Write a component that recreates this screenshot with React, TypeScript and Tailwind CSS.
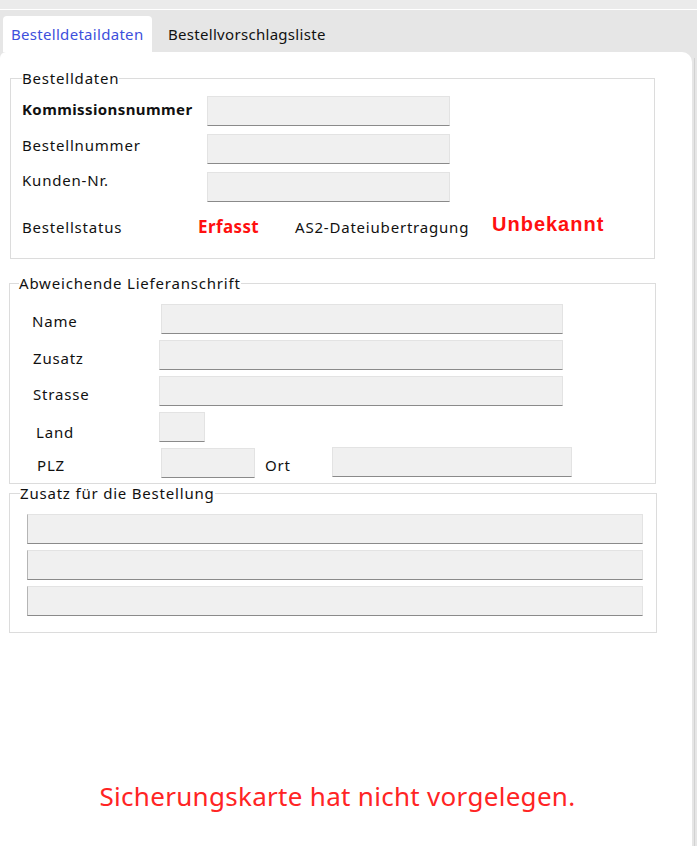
const field = 'h-[30px] shrink-0 bg-[#f0f0f0] border border-[#e3e3e3] border-b-[#8a8a8a]'
const txt = 'text-[15px] leading-[20px] tracking-[0.8px]'

function Group({ title, className, children }: { title: string; className: string; children: React.ReactNode }) {
  return (
    <fieldset className={`border border-[#dcdcdc] ${className}`}>
      <legend className="text-[15px] leading-[18px] tracking-[0.8px] text-[#111]">{title}</legend>
      {children}
    </fieldset>
  )
}

export default function App() {
  return (
    <div className="w-[697px] h-[846px] overflow-hidden bg-[#e6e6e6] font-['Noto_Sans','Open_Sans',sans-serif] text-[#111]">
      {/* window chrome strip */}
      <div className="h-[10px] bg-[#ebebeb] border-b border-white" />

      {/* tabs */}
      <div className="h-[42px] flex items-end pl-[3px]">
        <div className="h-[36px] w-[149px] bg-white rounded-t-[4px] flex items-center pl-[8px] text-[15px] tracking-[0.3px] text-[#3d4fdc]">Bestelldetaildaten</div>
        <div className="h-[36px] flex items-center pl-[16px] text-[15px] tracking-[0.3px]">Bestellvorschlagsliste</div>
      </div>

      <div className="flex">
        <div className="w-[692px] h-[794px] bg-white rounded-tr-[10px] rounded-tl-[6px] flex flex-col">
          <Group title="Bestelldaten" className="ml-[10px] mt-[17px] w-[645px] pl-[11px] pt-[9px] pb-[20px]">
            <div className="flex flex-col gap-[8px]">
              <div className="flex h-[30px] items-start">
                <div className="w-[185px] shrink-0 text-[15px] leading-[20px] tracking-[0.4px] font-bold pt-[3px]">Kommissionsnummer</div>
                <div className={`${field} w-[243px]`} />
              </div>
              <div className="flex h-[30px] items-start">
                <div className={`w-[185px] shrink-0 ${txt} pt-[1px]`}>Bestellnummer</div>
                <div className={`${field} w-[243px]`} />
              </div>
              <div className="flex h-[30px] items-start">
                <div className={`w-[185px] shrink-0 ${txt} -mt-[2px]`}>Kunden-Nr.</div>
                <div className={`${field} w-[243px]`} />
              </div>
            </div>
            <div className={`mt-[14px] h-[22px] flex items-center ${txt}`}>
              <div className="w-[176px] shrink-0">Bestellstatus</div>
              <div className="w-[97px] shrink-0 text-[17px] font-bold tracking-[0.4px] text-[#ff1010]">Erfasst</div>
              <div className="w-[197px] shrink-0">AS2-Dateiubertragung</div>
              <div className="font-['Liberation_Sans',Arial,sans-serif] text-[20px] font-bold tracking-[1px] text-[#ff1010] -mt-[6px]">Unbekannt</div>
            </div>
          </Group>

          <Group title="Abweichende Lieferanschrift" className="ml-[9px] mt-[15px] w-[647px] pl-[9px] pt-[12px] pb-[5px]">
            <div className={`flex flex-col gap-[6px] ${txt}`}>
              <div className="flex h-[30px] items-center">
                <div className="w-[142px] shrink-0 pl-[13px] pt-[3px]">Name</div>
                <div className={`${field} w-[402px]`} />
              </div>
              <div className="flex h-[30px] items-center">
                <div className="w-[140px] shrink-0 pl-[14px] pt-[5px]">Zusatz</div>
                <div className={`${field} w-[404px]`} />
              </div>
              <div className="flex h-[30px] items-center">
                <div className="w-[140px] shrink-0 pl-[14px] pt-[5px]">Strasse</div>
                <div className={`${field} w-[404px]`} />
              </div>
              <div className="flex h-[30px] items-center">
                <div className="w-[140px] shrink-0 pl-[17px] pt-[9px]">Land</div>
                <div className={`${field} w-[46px]`} />
              </div>
              <div className="flex h-[30px] items-center">
                <div className="w-[142px] shrink-0 pl-[18px] pt-[4px]">PLZ</div>
                <div className={`${field} w-[94px]`} />
                <div className="ml-[10px] w-[67px] shrink-0 pt-[4px]">Ort</div>
                <div className={`${field} w-[240px] -mt-[2px]`} />
              </div>
            </div>
          </Group>

          <Group title="Zusatz für die Bestellung" className="ml-[9px] mt-0 w-[648px] pl-[10px] pt-[12px] pb-[16px]">
            <div className="flex flex-col gap-[6px] pl-[7px]">
              <div className={`${field} w-[616px] border-l-[#b5b5b5]`} />
              <div className={`${field} w-[616px] border-l-[#b5b5b5]`} />
              <div className={`${field} w-[616px] border-l-[#b5b5b5]`} />
            </div>
          </Group>

          <div className="mt-auto mb-[34px] pr-[17px] text-center text-[26px] leading-[32px] tracking-[0.3px] text-[#ff2424]">
            Sicherungskarte hat nicht vorgelegen.
          </div>
        </div>
        <div className="w-[5px] h-[794px] flex justify-center pt-[6px]">
          <div className="w-[1px] h-full bg-[#d2d2d2]" />
        </div>
      </div>
    </div>
  )
}
